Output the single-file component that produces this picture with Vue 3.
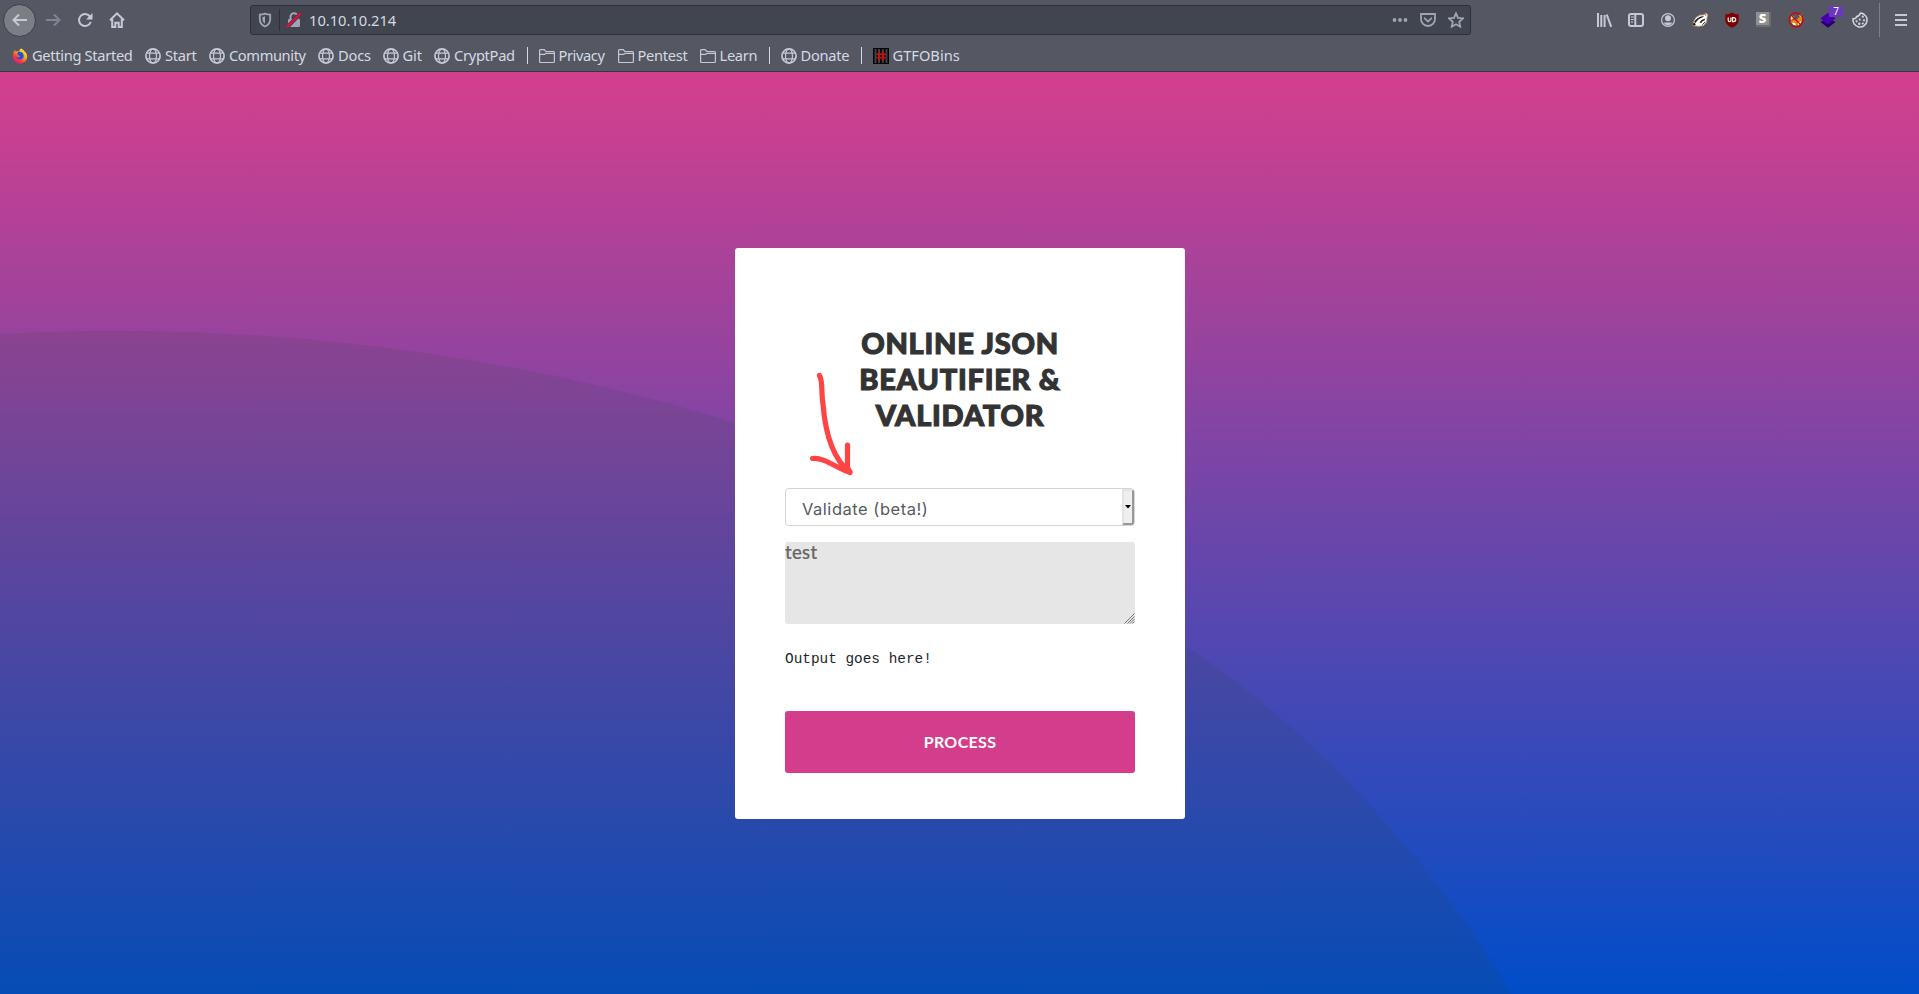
<script setup>
const bookmarks = [
  { icon: 'firefox', label: 'Getting Started', w: 101, ls: -0.32 },
  { icon: 'globe', label: 'Start', w: 32, ls: -0.3 },
  { icon: 'globe', label: 'Community', w: 77, ls: -0.4 },
  { icon: 'globe', label: 'Docs', w: 32.5, ls: -0.2 },
  { icon: 'globe', label: 'Git', w: 19.5, ls: -0.1 },
  { icon: 'globe', label: 'CryptPad', w: 60.5, ls: -0.3 },
  { icon: 'sep' },
  { icon: 'folder', label: 'Privacy', w: 47, ls: -0.4 },
  { icon: 'folder', label: 'Pentest', w: 50, ls: -0.3 },
  { icon: 'folder', label: 'Learn', w: 37, ls: -0.3 },
  { icon: 'sep' },
  { icon: 'globe', label: 'Donate', w: 48, ls: -0.3 },
  { icon: 'sep' },
  { icon: 'gtfo', label: 'GTFOBins', w: 69, ls: 0 },
]
</script>

<template>
  <div class="window">
    <header class="chrome">
      <div class="toolbar">
        <div class="nav">
          <button class="back">
            <svg width="16" height="16" viewBox="0 0 16 16"><path d="M15 8H2M7 2.5 1.5 8 7 13.5" class="ln" /></svg>
          </button>
          <svg class="fwd" width="16" height="16" viewBox="0 0 16 16"><path d="M1 8h13M9 2.5 14.5 8 9 13.5" class="ln" /></svg>
          <svg class="reload" width="16" height="16" viewBox="0 0 16 16"><path d="M13 4.6A6 6 0 1 0 13.7 10" class="ln" /><path d="M15.5 1v6.5H9z" fill="#c5c9d6" /></svg>
          <svg class="home" width="16" height="16" viewBox="0 0 16 16"><path d="M1 8.2 8 1.4l7 6.8M3.2 7v8H6.3v-4.2h3.4V15h3.1V7" class="ln" /></svg>
        </div>
        <div class="urlbar">
          <svg class="shield" width="14" height="16" viewBox="0 0 14 16"><path d="M7 1.6c2 .8 3.800 1 5.200 1V7c0 4-2 6.200-5.200 7.500C3.800 13.200 1.800 11 1.800 7V2.600c1.400 0 3.200-.2 5.200-1z" fill="none" stroke="#a0a5b1" stroke-width="1.8" /><path d="M7 4.300v7.400c-1.700-1-2.600-2.500-2.600-4.700V4.900C5.300 4.800 6.200 4.600 7 4.300z" fill="#a0a5b1" /></svg>
          <i class="split"></i>
          <svg class="lock" width="16" height="16" viewBox="0 0 16 16"><rect x="2" y="7" width="12" height="8" rx="1.300" fill="#a0a5b1" /><path d="M4.500 8V4.800a3.500 3.500 0 0 1 7 0V8" fill="none" stroke="#a0a5b1" stroke-width="2" /><path d="M1.300 15 14.700 1.300" stroke="#404550" stroke-width="4" /><path d="M1 15 14.500 1.200" stroke="#f5063c" stroke-width="2" /></svg>
          <span class="url">10.10.10.214</span>
          <div class="actions">
            <svg width="16" height="16" viewBox="0 0 16 16" fill="#a0a5b1"><circle cx="2.500" cy="8" r="1.900" /><circle cx="8" cy="8" r="1.900" /><circle cx="13.500" cy="8" r="1.900" /></svg>
            <svg width="16" height="16" viewBox="0 0 16 16" class="act"><path d="M1 2h14v5a7 7 0 0 1-14 0z" /><path d="m4.700 6.300 3.300 3.300 3.300-3.300" stroke-linecap="round" /></svg>
            <svg width="16" height="16" viewBox="0 0 16 16" class="act"><path d="m8 1.300 2 4.600 5 .5-3.800 3.400 1.100 4.900L8 12.200l-4.300 2.500 1.100-4.900L1 6.400l5-.5z" /></svg>
          </div>
        </div>
        <div class="tools">
          <svg width="16" height="16" viewBox="0 0 16 16"><path d="M2 1v14M5.300 3v12M8.600 3v12" class="ln" /><path d="m10.700 2.500 4.500 12.300" class="ln" /></svg>
          <svg width="16" height="16" viewBox="0 0 16 16"><rect x="1" y="2" width="14" height="12" rx="2" class="ln" /><path d="M7.300 2v12" class="ln" stroke-width="1.500" /><path d="M3 5h2.800M3 7.500h2.800M3 10h2" stroke="#c5c9d6" /></svg>
          <svg width="16" height="16" viewBox="0 0 16 16"><circle cx="8" cy="8" r="6.400" fill="none" stroke="#c5c9d6" stroke-width="1.200" /><circle cx="8" cy="6.300" r="3" fill="#c5c9d6" /><path d="M3.600 10.300c1 .3 1.700.5 2.600.2h3.600c.9.300 1.600.1 2.600-.2C11.600 12.300 10 13.200 8 13.200s-3.600-.9-4.400-2.900z" fill="#c5c9d6" /></svg>
          <svg width="16" height="16" viewBox="0 0 16 16"><path d="M1 13.500 2 9l2-3.500 4-2.300 3.800-.3L14 1.300l1.600 1.500-.7 3-.5 4.500-3 3.200-4.700.8z" fill="#fff" stroke="#e9a66d" stroke-width=".8" /><path d="M2 10C4.500 6.200 7.500 4.300 12 3.900L10.800 5.200C7.500 6.300 5 8.500 3.500 11z" fill="#24221f" /><path d="M7.500 10.500c1-2 3-3.200 5.800-4L12.500 8.500l-2.300 1-.8 1.600z" fill="#28231f" /><path d="m10.500 12.700 3-3M13 2.700l1.200.4" stroke="#222" /><circle cx="2.200" cy="12.200" r="1.200" fill="#111" /></svg>
          <svg width="16" height="16" viewBox="0 0 16 16"><path d="M8 .5c2 1.300 4.200 1.800 6.700 1.800v5.200c0 3.800-2.200 6.300-6.700 8.200-4.500-1.900-6.700-4.400-6.700-8.200V2.300C3.800 2.300 6 1.800 8 .5z" fill="#800000" /><path d="M4.200 5.500v2.700a1.400 1.400 0 0 0 2.800 0V5.500M8.600 5.600v4h1.100a2 2 0 0 0 0-4z" fill="none" stroke="#fff" stroke-width="1.200" /></svg>
          <span class="sico"><b>S</b></span>
          <svg width="16" height="16" viewBox="0 0 16 16"><path d="M2.500 10 5 7.800l3 .2 3-2.500 1-3L14.500 6l-1 5L10 13.500 6 13z" fill="#e98415" /><path d="M2.500 2.500 6.500 5 3 8.500zM11 3l2.500-1v4z" fill="#f4d7a5" /><path d="m4 10.500 3 .5 1 2.500-3-1zM10 11l3-2-.5 2.500L10 13z" fill="#fff" /><circle cx="8" cy="8" r="7" fill="none" stroke="#c20b0b" stroke-width="1.300" /><path d="m3 3 10 10" stroke="#c20b0b" stroke-width="1.300" /></svg>
          <span class="layers">
            <svg width="16" height="16" viewBox="0 0 16 16"><path d="m.5 10 3-1.500h9l3 1.500L8 15.800z" fill="#21006b" /><path d="M8 .7 15.700 6.600 8 12.500.3 6.600z" fill="#4b00b0" /></svg>
            <em>7</em>
          </span>
          <svg width="16" height="16" viewBox="0 0 16 16"><path d="M8.500 1.100A7 7 0 1 1 1.200 6.500c1.700.6 3-.1 3.300-1.900 2 0 3-1.500 4-3.500z" fill="none" stroke="#d5d8df" stroke-width="1.500" /><g fill="#d5d8df"><circle cx="10.800" cy="4.700" r="1.100" /><circle cx="7.800" cy="7.500" r="1.100" /><circle cx="12" cy="8.300" r="1.100" /><circle cx="4.600" cy="9.300" r="1.100" /><circle cx="7.300" cy="11.800" r="1.200" /><circle cx="10.800" cy="11.500" r="1" /></g></svg>
        </div>
        <i class="vline"></i>
        <svg class="menu" width="16" height="16" viewBox="0 0 16 16"><path d="M2 3h12M2 8h12M2 13h12" class="ln" /></svg>
      </div>
      <nav class="bookmarks">
        <template v-for="(b, i) in bookmarks" :key="i">
          <i v-if="b.icon === 'sep'" class="sep"></i>
          <a v-else>
            <svg v-if="b.icon === 'globe'" width="16" height="16" viewBox="0 0 16 16" fill="none" stroke="#c5c9d6" stroke-width="1.200"><circle cx="8" cy="8" r="7.100" stroke-width="1.700" /><ellipse cx="8" cy="8" rx="3.500" ry="7" /><path d="M2 5.200h12M2 10.800h12" /></svg>
            <svg v-else-if="b.icon === 'folder'" width="16" height="16" viewBox="0 0 16 16" fill="none" stroke="#c5c9d6" stroke-width="1.200"><path d="M.6 13.200V2.500q0-.9.900-.9h3.700l1.800 2h7.400q1 0 1 1v8.900q0 1-1 1H1.600q-1 0-1-1zM.6 6.400H5.500l1.300-.900h8.600" /></svg>
            <svg v-else-if="b.icon === 'gtfo'" width="16" height="16" viewBox="0 0 16 16"><rect width="16" height="16" fill="#050505" /><path d="M1.500 1h2v14h-2zM5 1h2v14H5zM8.700 1h2v14h-2zM12.500 1h2v14h-2z" fill="#3d4148" /><path d="M6 3.500v9M10 3.500v9M3.500 6.200h9M3.500 10h9" stroke="#d10c10" stroke-width="1.700" /></svg>
            <svg v-else width="16" height="16" viewBox="0 0 16 16">
              <defs>
                <linearGradient id="fx" x1=".85" y1=".1" x2=".2" y2=".95"><stop offset="0" stop-color="#fff044" /><stop offset=".4" stop-color="#ff9a1c" /><stop offset=".7" stop-color="#ff3647" /><stop offset="1" stop-color="#e31587" /></linearGradient>
              </defs>
              <path d="M9 .5c2 1 3 2 3.500 3 1.800 1.200 2.700 3 2.700 5a7.200 7.200 0 0 1-14.400 0C.8 6 1.500 3.500 3 2l.7 1.500C5 3 6 3.200 7 3.300 7.300 2 8 1.200 9 .5z" fill="url(#fx)" /><path d="M7 3.500c3 .1 4.700 1.900 4.700 4.500 0 2-1.500 3.500-3.700 3.500-2 0-3.600-1.300-3.600-3 1 .8 2.600 1 3.800-.3C7.200 7.500 5.500 7.200 5.300 6 5.300 5 6 4 7 3.500z" fill="#1b55d6" />
            </svg>
            <span :style="{ width: b.w + 'px', letterSpacing: b.ls + 'px' }">{{ b.label }}</span>
          </a>
        </template>
      </nav>
    </header>

    <main class="page">
      <svg class="wave" width="1919" height="922" viewBox="0 72 1919 922"><path d="M0 334C40 332 77 331 115 331C330 331 535 361 740 424.500C890 471 1043 551 1185 646C1305 722 1438 866 1511 994H0z" /></svg>
      <form class="card">
        <h1>ONLINE JSON<br />BEAUTIFIER &amp;<br />VALIDATOR</h1>
        <div class="select">
          <span>Validate (beta!)</span>
          <i class="drop"><svg width="6" height="4" viewBox="0 0 6 4"><path d="M0 0h6L3 3.500z" /></svg></i>
        </div>
        <div class="area">
          <span>test</span>
          <svg width="11" height="11" viewBox="0 0 11 11"><path d="M.5 10.500l10-10M3.500 10.500l7-7M6 10.500 10.500 6M8.500 10.500l2-2" /></svg>
        </div>
        <pre>Output goes here!</pre>
        <button type="button" class="process">PROCESS</button>
      </form>
      <svg class="arrow" width="44" height="106" viewBox="810 370 44 106"><path d="M819.500 375.500C823 381 821 392 823 404C825 430 832 458 850 472.500M847.500 445V468L850 472M812.500 458.500C824 457 836 468 850 472.500" /></svg>
    </main>
  </div>
</template>

<style>
body { margin: 0; overflow: hidden; }
</style>

<style scoped>
.window { width: 1919px; height: 994px; display: flex; flex-direction: column; overflow: hidden; }
svg { display: block; flex: none; }
i, em { font-style: normal; }
.ln { fill: none; stroke: #c5c9d6; stroke-width: 2; }
.chrome { box-sizing: border-box; height: 72px; flex: none; background: #555863; border-bottom: 1px solid #343842; font-family: "Noto Sans", sans-serif; color: #d3dae3; }
.toolbar { height: 40px; display: flex; align-items: center; }
.nav { width: 250px; display: flex; align-items: center; }
.back { box-sizing: border-box; width: 33px; height: 33px; margin-left: 3px; padding: 0 0 0 1px; border: 1px solid #3c3f48; border-radius: 50%; background: #7c7e85; display: flex; align-items: center; justify-content: center; }
.fwd { margin-left: 9px; opacity: .4; }
.reload { margin-left: 16px; }
.home { margin-left: 16px; }
.urlbar { box-sizing: border-box; width: 1221px; height: 30px; border: 1px solid #2d313a; border-radius: 3px; background: #404550; display: flex; align-items: center; }
.shield { margin-left: 7px; }
.split { width: 1px; height: 22px; margin: 0 6px 0 7px; background: #2d313a; }
.url { margin-left: 7px; font-size: 14.670px; line-height: 20px; }
.actions { margin-left: auto; margin-right: 6px; display: flex; gap: 12px; }
.act { fill: none; stroke: #a0a5b1; stroke-width: 1.800; }
.tools { margin-left: 125px; display: flex; gap: 16px; align-items: center; }
.sico { width: 16px; height: 16px; display: flex; }
.sico b { width: 13px; height: 13px; background: #909090; border: solid #6d6d6d; border-width: 0 2px 2px 0; color: #fff; font: 900 13px/13px "Noto Sans", sans-serif; text-align: center; }
.layers { position: relative; }
.layers em { position: absolute; left: 9px; top: -6px; width: 14px; height: 11px; border-radius: 1px; background: #6a38bb; color: #fff; font-size: 10px; line-height: 11px; text-align: center; }
.vline { width: 1px; height: 34px; margin: 0 13px 0 11px; background: #7d808a; }
.bookmarks { height: 31px; padding-left: 12px; display: flex; align-items: center; gap: 12px; }
.bookmarks a { display: flex; align-items: center; gap: 4px; }
.bookmarks span { margin-top: -1px; font-size: 14.670px; line-height: 19px; white-space: nowrap; }
.sep { width: 1px; height: 17px; margin-right: -1px; background: #d3dae3; }
.page { position: relative; flex: 1; background: linear-gradient(#d53f8d, #004dc8); display: flex; justify-content: center; align-items: flex-start; }
.wave { position: absolute; left: 0; top: 0; fill: rgba(45, 72, 65, .13); }
.card { position: relative; box-sizing: border-box; width: 450px; height: 571px; margin: 176px 0 0 1px; padding: 77px 50px 0; border-radius: 3px; background: #fff; }
h1 { margin: 0; font: 900 29px/36px Lato, sans-serif; letter-spacing: .75px; color: #333; -webkit-text-stroke: 1.100px #333; text-align: center; }
.select { box-sizing: border-box; height: 38px; margin-top: 55px; border: 1px solid #d5d5d5; border-radius: 4px; display: flex; overflow: hidden; }
.select span { flex: 1; padding-left: 16px; font: 16.500px/40px Inter, sans-serif; letter-spacing: .52px; color: #555a60; }
.drop { box-sizing: border-box; width: 12px; border: 2px solid; border-color: #e3e3e3 #999 #999 #e3e3e3; background: #efefef; display: flex; align-items: center; justify-content: center; }
.area { height: 82px; margin-top: 16px; border-radius: 3px; background: #e6e6e6; display: flex; justify-content: space-between; align-items: flex-end; }
.area span { align-self: flex-start; font: 500 18.500px/20px Lato, sans-serif; letter-spacing: .3px; color: #666; -webkit-text-stroke: .2px #666; }
.area svg { fill: none; stroke: #777; stroke-width: 1; }
pre { margin: 25px 0 0; height: 62px; font: 14.400px/20px "Liberation Mono", monospace; color: #212529; }
.process { display: block; width: 350px; height: 62px; padding: 0; border: 0; border-radius: 3px; background: #d43d8b; color: #fff; font: 700 16px/62px Lato, sans-serif; letter-spacing: .35px; }
.arrow { position: absolute; left: 810px; top: 298px; fill: none; stroke: #ff4444; stroke-width: 5.200; stroke-linecap: round; stroke-linejoin: round; overflow: visible; }
</style>
